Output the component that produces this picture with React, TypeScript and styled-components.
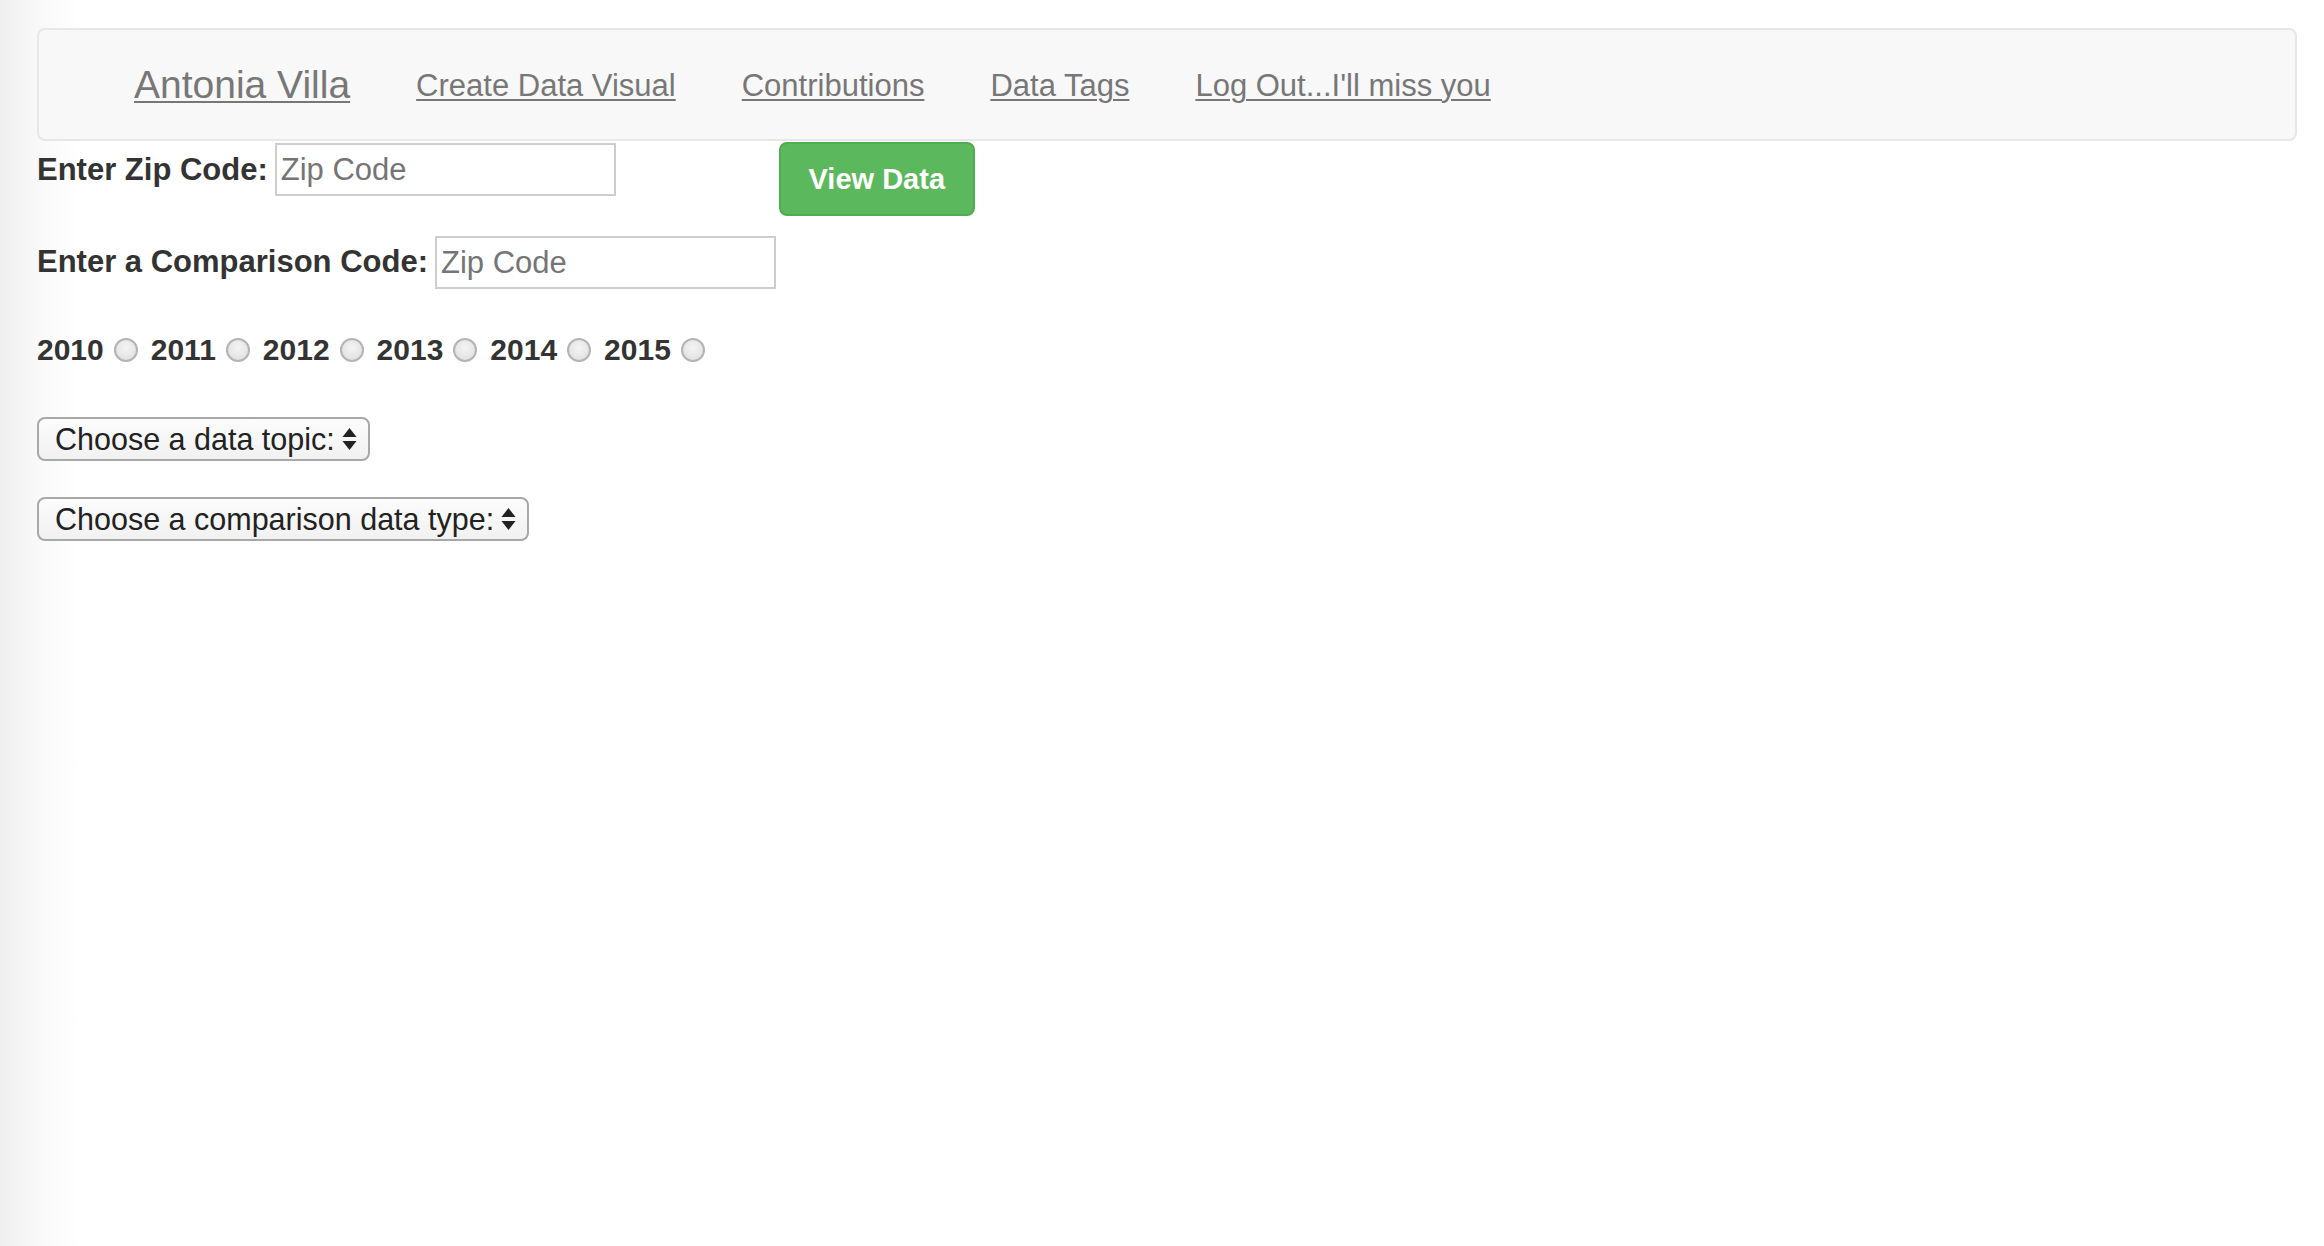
import React, { useState } from "react";
import styled, { createGlobalStyle } from "styled-components";

const GlobalStyle = createGlobalStyle`
  html, body {
    margin: 0;
    padding: 0;
  }
  body {
    min-height: 1246px;
    background: linear-gradient(to right, #efefef 0px, #f8f8f8 36px, #ffffff 80px);
    font-family: "Liberation Sans", Arial, sans-serif;
    color: #333;
  }
`;

const years = ["2010", "2011", "2012", "2013", "2014", "2015"];
const navLinks = ["Create Data Visual", "Contributions", "Data Tags", "Log Out...I'll miss you"];

const App = () => {
  const [year, setYear] = useState<string>("");

  return (
    <React.Fragment>
      <GlobalStyle />
      <Page>
        <Navbar>
          <Brand href="#">Antonia Villa</Brand>
          {navLinks.map((link) => (
            <NavLink key={link} href="#">
              {link}
            </NavLink>
          ))}
        </Navbar>

        <FormRow $top={1} $height={74}>
          <FieldLabel $lineHeight={53} $offset={1}>Enter Zip Code:</FieldLabel>
          <ZipInput type="text" placeholder="Zip Code" $offset={1} />
          <ViewButton type="button">View Data</ViewButton>
        </FormRow>

        <FormRow $top={20} $height={52}>
          <FieldLabel $lineHeight={52} $offset={0}>Enter a Comparison Code:</FieldLabel>
          <ZipInput type="text" placeholder="Zip Code" $offset={0} />
        </FormRow>

        <YearRow>
          {years.map((y) => (
            <YearLabel key={y}>
              {y}
              <RadioInput
                type="radio"
                name="year"
                value={y}
                checked={year === y}
                onChange={() => setYear(y)}
              />
            </YearLabel>
          ))}
        </YearRow>

        <SelectBox $top={55}>
          <span>Choose a data topic:</span>
          <SelectArrows />
        </SelectBox>
        <SelectBox $top={36}>
          <span>Choose a comparison data type:</span>
          <SelectArrows />
        </SelectBox>
      </Page>
    </React.Fragment>
  );
};

const SelectArrows = () => (
  <svg width="15" height="22" viewBox="0 0 15 22">
    <path d="M7.5 0 L14.5 9 L0.5 9 Z" fill="#222" />
    <path d="M0.5 13 L14.5 13 L7.5 22 Z" fill="#222" />
  </svg>
);

export default App;

const Page = styled.div`
  display: flex;
  flex-direction: column;
  align-items: flex-start;
  padding: 28px 27px 0 37px;
`;

const Navbar = styled.nav`
  box-sizing: border-box;
  align-self: stretch;
  height: 113px;
  display: flex;
  align-items: center;
  gap: 66px;
  padding-left: 95px;
  background: #f8f8f8;
  border: 2px solid #e7e7e7;
  border-radius: 8px;
`;

const Brand = styled.a`
  font-size: 39px;
  color: #777;
  text-decoration: underline;
  text-underline-offset: 3px;
  text-decoration-thickness: 2px;
  margin-top: 1px;
`;

const NavLink = styled.a`
  font-size: 31px;
  color: #777;
  text-decoration: underline;
  text-underline-offset: 3px;
  text-decoration-thickness: 2px;
  margin-top: 2px;
`;

const FormRow = styled.div<{ $top: number; $height: number }>`
  display: flex;
  align-items: flex-start;
  height: ${({ $height }) => $height}px;
  margin-top: ${({ $top }) => $top}px;
`;

const FieldLabel = styled.label<{ $lineHeight: number; $offset: number }>`
  font-size: 31px;
  font-weight: bold;
  color: #333;
  line-height: ${({ $lineHeight }) => $lineHeight}px;
  margin-top: ${({ $offset }) => $offset}px;
  margin-right: 7px;
  white-space: nowrap;
`;

const ZipInput = styled.input<{ $offset: number }>`
  box-sizing: border-box;
  width: 341px;
  height: 53px;
  margin: ${({ $offset }) => $offset}px 0 0 0;
  padding: 0 4px;
  border: 2px solid #cdcdcd;
  border-radius: 0;
  font-family: "Liberation Sans", Arial, sans-serif;
  font-size: 31px;
  color: #333;
  background: #fff;
  outline: none;

  &::placeholder {
    color: #757575;
  }
`;

const ViewButton = styled.button`
  box-sizing: border-box;
  width: 196px;
  height: 74px;
  margin-left: 163px;
  background: #5cb85c;
  border: 2px solid #4cae4c;
  border-radius: 8px;
  color: #fff;
  font-family: "Liberation Sans", Arial, sans-serif;
  font-size: 29px;
  font-weight: bold;
  cursor: pointer;
`;

const YearRow = styled.div`
  display: flex;
  align-items: center;
  margin-top: 50px;
  height: 24px;
`;

const YearLabel = styled.label`
  display: flex;
  align-items: center;
  font-size: 30px;
  font-weight: bold;
  color: #333;
  cursor: pointer;
`;

const RadioInput = styled.input`
  appearance: none;
  box-sizing: border-box;
  width: 24px;
  height: 24px;
  margin: 0 13px 0 10px;
  border-radius: 50%;
  border: 2px solid #b4b4b4;
  background: radial-gradient(circle at 50% 40%, #f4f4f4 0%, #e6e6e6 60%, #d8d8d8 100%);
  cursor: pointer;

  &:checked {
    background: radial-gradient(circle, #fff 0 4px, #3b8fe6 5px);
    border-color: #2f7ed8;
  }
`;

const SelectBox = styled.div<{ $top: number }>`
  box-sizing: border-box;
  display: flex;
  align-items: center;
  gap: 7px;
  height: 44px;
  margin-top: ${({ $top }) => $top}px;
  padding: 0 11px 0 16px;
  background: linear-gradient(to bottom, #fcfcfc, #f1f1f1);
  border: 2px solid #a8a8a8;
  border-radius: 8px;
  font-size: 30.5px;
  color: #222;
  cursor: pointer;
`;
